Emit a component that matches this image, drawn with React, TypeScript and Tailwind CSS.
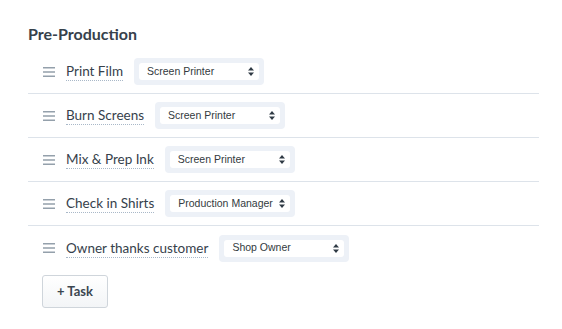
import React from 'react'

interface Task {
  id: number
  title: string
  role: string
}

const tasks: Task[] = [
  { id: 1, title: 'Print Film', role: 'Screen Printer' },
  { id: 2, title: 'Burn Screens', role: 'Screen Printer' },
  { id: 3, title: 'Mix & Prep Ink', role: 'Screen Printer' },
  { id: 4, title: 'Check in Shirts', role: 'Production Manager' },
  { id: 5, title: 'Owner thanks customer', role: 'Shop Owner' },
]

function DragHandle() {
  return (
    <svg width="12" height="10" viewBox="0 0 12 10" className="shrink-0">
      <rect x="0" y="0" width="12" height="1.5" fill="#94a0ab" />
      <rect x="0" y="4.25" width="12" height="1.5" fill="#94a0ab" />
      <rect x="0" y="8.5" width="12" height="1.5" fill="#94a0ab" />
    </svg>
  )
}

function RoleSelect({ value }: { value: string }) {
  return (
    <div className="rounded-[4px] bg-[#edf1f7] px-[5px] py-[5px]">
      <div
        className="flex h-[17px] w-[120px] items-center justify-between gap-[3px] rounded-[3px] bg-white pl-[8px] pr-[5px] text-[10.5px] text-[#333a40]"
        style={{ fontFamily: '"Liberation Sans", Arial, sans-serif' }}
      >
        <span className="whitespace-nowrap">{value}</span>
        <svg width="6" height="9" viewBox="0 0 6 9" className="shrink-0">
          <path d="M3 0 L6 3.5 L0 3.5 Z" fill="#2f3a44" />
          <path d="M0 5.5 L6 5.5 L3 9 Z" fill="#2f3a44" />
        </svg>
      </div>
    </div>
  )
}

export default function App() {
  return (
    <div
      className="min-h-screen bg-white pl-[28px] pt-[24px]"
      style={{ fontFamily: 'Lato, "Open Sans", sans-serif' }}
    >
      <h2 className="mb-[6px] h-[20px] text-[16px] font-bold leading-[20px] text-[#36414b]">Pre-Production</h2>

      <div className="w-[511px]">
        {tasks.map((task, i) => (
          <div
            key={task.id}
            className={`flex h-[44px] items-center pl-[15px] ${
              i < tasks.length - 1 ? 'border-b border-[#dde3ea]' : ''
            }`}
          >
            <DragHandle />
            <span className="ml-[11px] mr-[11px] whitespace-nowrap border-b border-dotted border-[#a9b8c8] text-[13.5px] leading-[18px] text-[#36414b]">
              {task.title}
            </span>
            <RoleSelect value={task.role} />
          </div>
        ))}
      </div>

      <button className="ml-[14px] mt-[5px] h-[33px] w-[66px] rounded-[3px] border border-[#cfd5db] bg-gradient-to-b from-white to-[#f3f5f7] text-[13px] font-bold text-[#3b4650]">
        + Task
      </button>
    </div>
  )
}
